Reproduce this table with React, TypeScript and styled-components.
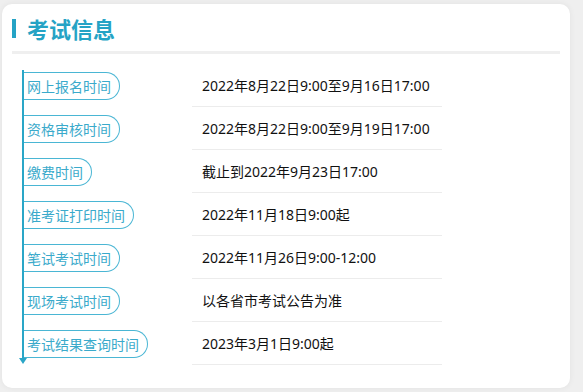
import React from "react";
import styled, { createGlobalStyle } from "styled-components";

const GlobalStyle = createGlobalStyle`
  * { box-sizing: border-box; }
  html, body { margin: 0; padding: 0; background: #efefef; }
  body { font-family: "Noto Sans CJK SC", "Noto Sans", sans-serif; }
`;

const Page = styled.div`
  padding: 4px 13px 4px 2px;
`;

const Card = styled.section`
  width: 568px;
  height: 384px;
  background: #fff;
  border-radius: 10px;
  box-shadow: 0 0 6px rgba(0, 0, 0, 0.06);
  padding: 12px 10px 0 10px;
`;

const TitleRow = styled.div`
  display: flex;
  align-items: center;
  height: 24px;
  gap: 11px;
`;

const TitleBar = styled.span`
  display: block;
  width: 4px;
  height: 19px;
  background: #25a3c5;
`;

const Title = styled.h2`
  margin: 0;
  font-size: 22px;
  line-height: 24px;
  font-weight: 700;
  color: #25a3c5;
`;

const Divider = styled.div`
  height: 3px;
  background: #efefef;
  margin: 11px 0 0 0;
  width: 548px;
`;

const Timeline = styled.ol`
  position: relative;
  list-style: none;
  margin: 10px 0 0 10px;
  padding: 0;

  &::before {
    content: "";
    position: absolute;
    left: 0;
    top: 6px;
    bottom: 7px;
    width: 2px;
    background: #2aa6c7;
  }
  &::after {
    content: "";
    position: absolute;
    left: -3px;
    bottom: 1px;
    border-left: 4px solid transparent;
    border-right: 4px solid transparent;
    border-top: 6px solid #2aa6c7;
  }
`;

const Row = styled.li`
  display: grid;
  grid-template-columns: 170px 250px;
  height: 43px;
`;

const LabelCell = styled.div`
  display: flex;
  align-items: center;
  padding-left: 2px;
`;

const Pill = styled.span`
  display: inline-block;
  height: 28px;
  line-height: 26px;
  font-size: 14px;
  color: #3aaacb;
  border: 1px solid #4ab6d4;
  border-left: none;
  border-radius: 0 14px 14px 0;
  padding: 0 8px 0 3px;
  white-space: nowrap;
`;

const ValueCell = styled.div`
  display: flex;
  align-items: center;
  padding-left: 10px;
  border-bottom: 1px solid #ececec;
  font-family: "Noto Sans", "Noto Sans CJK SC", sans-serif;
  font-size: 14px;
  color: #111;
  white-space: nowrap;
`;

const items: [string, string][] = [
  ["网上报名时间", "2022年8月22日9:00至9月16日17:00"],
  ["资格审核时间", "2022年8月22日9:00至9月19日17:00"],
  ["缴费时间", "截止到2022年9月23日17:00"],
  ["准考证打印时间", "2022年11月18日9:00起"],
  ["笔试考试时间", "2022年11月26日9:00-12:00"],
  ["现场考试时间", "以各省市考试公告为准"],
  ["考试结果查询时间", "2023年3月1日9:00起"],
];

export default function App() {
  return (
    <>
      <GlobalStyle />
      <Page>
        <Card>
          <TitleRow>
            <TitleBar />
            <Title>考试信息</Title>
          </TitleRow>
          <Divider />
          <Timeline>
            {items.map(([label, value]) => (
              <Row key={label}>
                <LabelCell>
                  <Pill>{label}</Pill>
                </LabelCell>
                <ValueCell>{value}</ValueCell>
              </Row>
            ))}
          </Timeline>
        </Card>
      </Page>
    </>
  );
}
